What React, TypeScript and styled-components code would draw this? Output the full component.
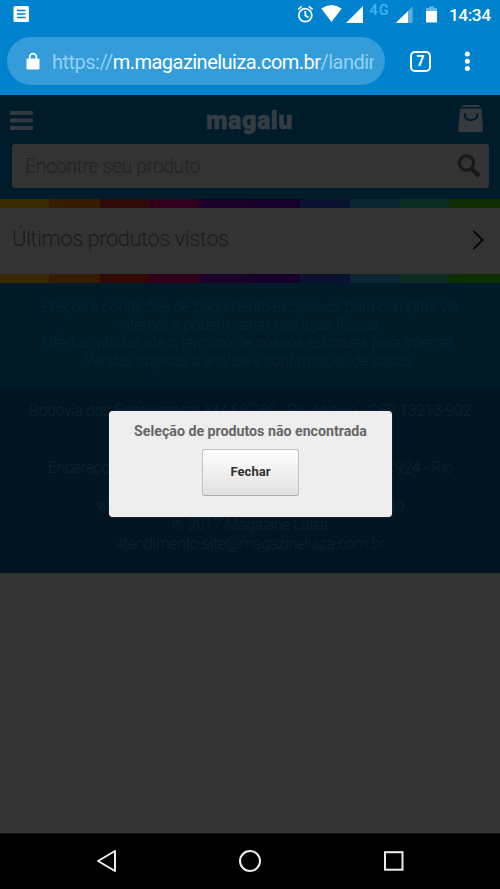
import React from "react";
import styled, { createGlobalStyle } from "styled-components";

const GlobalStyle = createGlobalStyle`
  * { box-sizing: border-box; }
  html, body { margin: 0; padding: 0; background: #000; }
  body { font-family: Roboto, "Liberation Sans", sans-serif; overflow: hidden; }
`;

const Screen = styled.div`
  width: 500px;
  height: 889px;
  display: flex;
  flex-direction: column;
  background: #333;
`;

const Chrome = styled.header`
  height: 95px;
  flex: none;
  background: #0083cf;
  color: #fff;
`;

const StatusBar = styled.div`
  height: 37px;
  padding: 0 9px 0 13px;
  display: flex;
  justify-content: space-between;
`;

const StatusGlyphs = styled.svg`
  display: block;
  height: 30px;
`;

const StatusRight = styled.div`
  display: flex;
`;

const Clock = styled.span`
  font-size: 17.3px;
  font-weight: 500;
  line-height: 30px;
  width: 42px;
  white-space: nowrap;
  letter-spacing: -0.45px;
`;

const AddressRow = styled.div`
  display: flex;
  align-items: center;
  padding-left: 7px;
`;

const AddressPill = styled.div`
  width: 378px;
  height: 48px;
  border-radius: 24px;
  background: #339cd9;
  display: flex;
  align-items: center;
  padding: 2px 11px 0 19px;
`;

const LockIcon = styled.svg`
  flex: none;
  margin: -2px 12px 0 0;
`;

const Url = styled.div`
  width: 322px;
  overflow: hidden;
  white-space: nowrap;
  font-size: 20px;
  letter-spacing: -0.52px;
  line-height: 28px;
`;

const Faded = styled.span`
  color: #93d0f4;
`;

const TabCount = styled.div`
  width: 21px;
  height: 21px;
  margin-left: 25px;
  border: 2px solid #fff;
  border-radius: 5px;
  font-size: 14px;
  font-weight: 700;
  line-height: 17px;
  text-align: center;
`;

const MenuDots = styled.svg`
  margin-left: 31px;
`;

const Page = styled.main`
  height: 738px;
  flex: none;
  display: grid;
  grid-template: 738px / 500px;
`;

const Layer = styled.div`
  grid-area: 1 / 1;
`;

const ModalLayer = styled(Layer)`
  display: flex;
  justify-content: center;
  align-items: flex-start;
  padding-top: 316px;
  z-index: 1;
`;

const StoreHeader = styled.div`
  height: 104px;
  background: #001b2a;
  padding: 8px 11px 0 12px;
`;

const BrandRow = styled.div`
  height: 41px;
  margin: 0 5px 0 -2px;
  display: flex;
  justify-content: space-between;
  align-items: flex-start;
`;

const Brand = styled.div`
  color: #333d43;
  font-size: 25px;
  font-weight: 900;
  line-height: 30px;
  letter-spacing: 0.6px;
  -webkit-text-stroke: 0.6px #333d43;
  padding-top: 3px;
  margin-left: 7px;
`;

const SearchField = styled.div`
  height: 44px;
  border-radius: 3px;
  background: #333;
  display: flex;
  align-items: center;
  justify-content: space-between;
  padding: 0 8px 0 13px;
  color: #222;
  font-size: 19.5px;
  letter-spacing: -0.4px;
  font-weight: 300;
`;

const Rainbow = styled.div`
  height: 9px;
  display: grid;
  grid-template-columns: 49px 51px 49px 50px 51px 50px 50px 50px 49px 51px;
`;

const Stripe = styled.i<{ $color: string }>`
  background: ${(p) => p.$color};
`;

const Recent = styled.div`
  height: 66px;
  display: flex;
  justify-content: space-between;
  align-items: center;
  padding: 0 15px 5px 12px;
  background: #333;
  color: #1b1b1b;
  font-size: 22px;
  letter-spacing: -0.52px;
  font-weight: 300;
`;

const Chevron = styled.svg`
  margin-top: 2px;
`;

const Notice = styled.div`
  height: 105px;
  background: #001a29;
  padding-top: 15px;
`;

const Company = styled.div`
  height: 185px;
  background: #001522;
  padding-top: 14px;
`;

const Line = styled.div<{ $height: number }>`
  height: ${(p) => p.$height}px;
  line-height: ${(p) => p.$height}px;
  font-size: 15.6px;
  letter-spacing: -0.25px;
  font-weight: 300;
  text-align: center;
  white-space: nowrap;
  color: #0d232f;
`;

const SplitLine = styled(Line)<{ $left: number; $right: number }>`
  display: flex;
  justify-content: space-between;
  padding: 0 ${(p) => p.$right}px 0 ${(p) => p.$left}px;
`;

const Dialog = styled.div`
  width: 283px;
  height: 106px;
  margin-left: 1px;
  border-radius: 4px;
  background: #eee;
  box-shadow: 0 0 1px #7a8186;
  display: flex;
  flex-direction: column;
  align-items: center;
`;

const DialogTitle = styled.div`
  height: 38px;
  padding-top: 10px;
  color: #666;
  font-size: 14.2px;
  font-weight: 700;
  line-height: 21px;
  white-space: nowrap;
`;

const CloseButton = styled.button`
  width: 97px;
  height: 47px;
  padding: 0 0 2px;
  border: 1px solid #c2c2c2;
  border-bottom-color: #aaa;
  border-radius: 3px;
  background: linear-gradient(#fff, #e1e1e1);
  color: #333;
  font: 700 13px Roboto, sans-serif;
`;

const NavBar = styled.nav`
  height: 56px;
  background: #000;
  border-top: 1px solid #111;
`;

const stripes = ["#3a2a00", "#371d00", "#300a08", "#30001b", "#1b0029", "#16002b", "#0b1231", "#0b2532", "#0b2d22", "#102f00"];

function RainbowBar() {
  return (
    <Rainbow>
      {stripes.map((color) => <Stripe key={color} $color={color} />)}
    </Rainbow>
  );
}

function StatusIcons() {
  return (
    <StatusGlyphs width="154" height="30" viewBox="295 0 154 30" fill="#fff">
      <g fill="none" stroke="#fff" strokeWidth="1.7">
        <circle cx="305.3" cy="15.2" r="6.5" />
        <path d="M305.3 11v4.5l3.2 2M298 9.3l3.8-3M308.8 6.3l3.8 3" />
      </g>
      <path d="M321.3 8.6q10.2-7 20.4 0L331.5 22z" />
      <path d="M363 6v17h-17z" />
      <text x="369.5" y="15.2" fontSize="14.5" fontWeight="500" letterSpacing="1" fill="#48b2ed">4G</text>
      <path d="M412.7 6.3V23h-17z" opacity=".35" />
      <path d="M408 11.3V23h-12.3z" />
      <path d="M429 6.4h5v1.7h3v3h-11v-3h3z" opacity=".4" />
      <path d="M426 11h11v11.5h-11z" />
    </StatusGlyphs>
  );
}

export default function App() {
  return (
    <>
      <GlobalStyle />
      <Screen>
        <Chrome>
          <StatusBar>
            <StatusGlyphs width="17" height="30" viewBox="0 0 17 30">
              <rect x="0.5" y="6" width="15.5" height="16" rx="1.5" fill="#fff" />
              <path d="M4 10.5h8.5M4 14h8.5M4 17.5h8.5" stroke="#0083cf" strokeWidth="1.3" />
            </StatusGlyphs>
            <StatusRight>
              <StatusIcons />
              <Clock>14:34</Clock>
            </StatusRight>
          </StatusBar>
          <AddressRow>
            <AddressPill>
              <LockIcon width="14" height="18" viewBox="0 0 14 18">
                <path d="M3.7 8V5a3.3 3.3 0 0 1 6.6 0v3" fill="none" stroke="#fff" strokeWidth="1.7" />
                <rect x=".5" y="6.5" width="13" height="11" rx="1.2" fill="#fff" />
              </LockIcon>
              <Url><Faded>https://</Faded>m.magazineluiza.com.br<Faded>/landin</Faded></Url>
            </AddressPill>
            <TabCount>7</TabCount>
            <MenuDots width="12" height="22" viewBox="0 0 12 22" fill="#fff">
              <circle cx="5.4" cy="4" r="2.5" />
              <circle cx="5.4" cy="11.3" r="2.5" />
              <circle cx="5.4" cy="18.6" r="2.5" />
            </MenuDots>
          </AddressRow>
        </Chrome>
        <Page>
          <Layer>
            <StoreHeader>
              <BrandRow>
                <svg width="24" height="30" viewBox="0 0 24 30" fill="#333a3e">
                  <rect y="8" width="23" height="4" rx="1" />
                  <rect y="15.5" width="23" height="4" rx="1" />
                  <rect y="23" width="23" height="4" rx="1" />
                </svg>
                <Brand>magalu</Brand>
                <svg width="26" height="30" viewBox="0 0 26 30">
                  <path d="M4.8 2h16l1.2 2H3.5zM2 5.5h21.5l1.6 20.8q.1 2.7-2.3 2.7H2.4Q0 29 .2 26.3z" fill="#343a3d" />
                  <path d="M6.7 11q0 6 6.3 6t6.3-6" fill="none" stroke="#001b2a" strokeWidth="2" strokeLinecap="round" />
                </svg>
              </BrandRow>
              <SearchField>
                <span>Encontre seu produto</span>
                <svg width="24" height="26" viewBox="0 0 24 26" fill="none" stroke="#181818">
                  <circle cx="9.5" cy="10" r="7.2" strokeWidth="3" />
                  <path d="m15 16 7 7" strokeWidth="4.5" />
                </svg>
              </SearchField>
            </StoreHeader>
            <RainbowBar />
            <Recent>
              <span>Últimos produtos vistos</span>
              <Chevron width="13" height="20" viewBox="0 0 13 20" fill="none" stroke="#070707" strokeWidth="2">
                <path d="m1.5 1 9 9-9 9" />
              </Chevron>
            </Recent>
            <RainbowBar />
            <Notice>
              <Line $height={18}>Preços e condições de pagamento exclusivos para compras via</Line>
              <Line $height={18}>internet e podem variar nas lojas físicas.</Line>
              <Line $height={18}>Ofertas válidas até o término de nossos estoques para internet.</Line>
              <Line $height={18}>Vendas sujeitas à análise e confirmação de dados.</Line>
            </Notice>
            <Company>
              <Line $height={19}>Rodovia dos Bandeirantes KM 68,760 - Rio Abaixo - CEP 13213-902</Line>
              <Line $height={38} />
              <SplitLine $height={19} $left={48} $right={47}><span>Endereço</span><span>924 - Rio</span></SplitLine>
              <Line $height={19} />
              <SplitLine $height={19} $left={97} $right={96}><span>www</span><span>to</span></SplitLine>
              <Line $height={19}>® 2017 Magazine Luiza</Line>
              <Line $height={19}>atendimento.site@magazineluiza.com.br</Line>
            </Company>
          </Layer>
          <ModalLayer>
            <Dialog role="dialog">
              <DialogTitle>Seleção de produtos não encontrada</DialogTitle>
              <CloseButton>Fechar</CloseButton>
            </Dialog>
          </ModalLayer>
        </Page>
        <NavBar>
          <svg width="500" height="55" viewBox="0 834 500 55" fill="none" stroke="#eee" strokeWidth="2">
            <path d="M98 861 115 851v20z" strokeLinejoin="round" />
            <circle cx="250" cy="861" r="10" />
            <rect x="385" y="852.2" width="17.5" height="17.5" />
          </svg>
        </NavBar>
      </Screen>
    </>
  );
}
